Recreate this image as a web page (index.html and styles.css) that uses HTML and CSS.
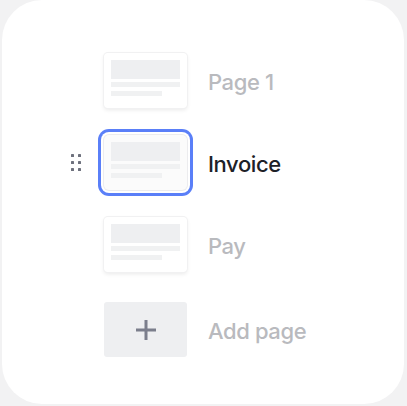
FILE: index.html
```html
<!DOCTYPE html>
<html lang="en">
<head>
    <link rel="stylesheet" href="styles.css">
</head>
<body>
    <div class="card">
        <div class="pages">
            <div class="row">
                <div class="handle"></div>
                <div class="thumb">
                    <div class="block"></div>
                    <div class="line"></div>
                    <div class="line short"></div>
                </div>
                <div class="label">Page 1</div>
            </div>
            <div class="row active">
                <div class="handle">
                    <svg width="11" height="17" viewBox="0 0 11 17">
                        <rect x="0" y="0" width="3" height="3" rx="0.6"/>
                        <rect x="7" y="0" width="3" height="3" rx="0.6"/>
                        <rect x="0" y="7" width="3" height="3" rx="0.6"/>
                        <rect x="7" y="7" width="3" height="3" rx="0.6"/>
                        <rect x="0" y="14" width="3" height="3" rx="0.6"/>
                        <rect x="7" y="14" width="3" height="3" rx="0.6"/>
                    </svg>
                </div>
                <div class="thumb">
                    <div class="block"></div>
                    <div class="line"></div>
                    <div class="line short"></div>
                </div>
                <div class="label">Invoice</div>
            </div>
            <div class="row">
                <div class="handle"></div>
                <div class="thumb">
                    <div class="block"></div>
                    <div class="line"></div>
                    <div class="line short"></div>
                </div>
                <div class="label">Pay</div>
            </div>
            <div class="row add">
                <div class="handle"></div>
                <div class="thumb new">
                    <svg width="22" height="22" viewBox="0 0 22 22">
                        <path d="M11 1v20M1 11h20" stroke="#7b7e8c" stroke-width="3" fill="none"/>
                    </svg>
                </div>
                <div class="label">Add page</div>
            </div>
        </div>
    </div>
</body>
</html>
```

FILE: styles.css
```css
body {
    margin: 0;
    background: #f2f2f3;
    font-family: Inter, "Noto Sans", sans-serif;
}

.card {
    height: 404px;
    margin: 0 3px 0 2px;
    background: #ffffff;
    border-radius: 40px;
    box-sizing: border-box;
    padding-top: 53px;
}

.pages {
    display: flex;
    flex-direction: column;
    gap: 27px;
}

.row {
    display: grid;
    grid-template-columns: 33px 83px auto;
    align-items: center;
    padding-left: 69px;
}

.row.add {
    margin-top: 3px;
}

.handle {
    display: flex;
    align-items: center;
    fill: #6e717d;
}

.thumb {
    height: 55px;
    box-sizing: border-box;
    padding: 7px 7px 0 7px;
    background: #ffffff;
    border-radius: 4px;
    box-shadow: 0 0 0 1px #f1f1f2, 0 2px 4px rgba(0, 0, 0, 0.09);
}

.thumb .block {
    height: 19px;
    background: #eeeff1;
}

.thumb .line {
    height: 5px;
    margin-top: 3px;
    background: #f0f1f2;
}

.thumb .line.short {
    width: 51px;
    margin-top: 4px;
}

.row.active .thumb {
    background: #fbfbfb;
    border-radius: 5px;
    box-shadow: 0 0 0 1px #ececee, 0 0 0 3px #ffffff, 0 0 0 6px #5a7ff8;
}

.thumb.new {
    display: flex;
    align-items: center;
    justify-content: center;
    padding: 0;
    background: #eeeff1;
    box-shadow: none;
    border-radius: 3px;
}

.label {
    margin-left: 21px;
    font-size: 22px;
    font-weight: 500;
    color: #b9babe;
    letter-spacing: -0.4px;
    padding-top: 3px;
}

.row.active .label {
    color: #1d2127;
}
```
